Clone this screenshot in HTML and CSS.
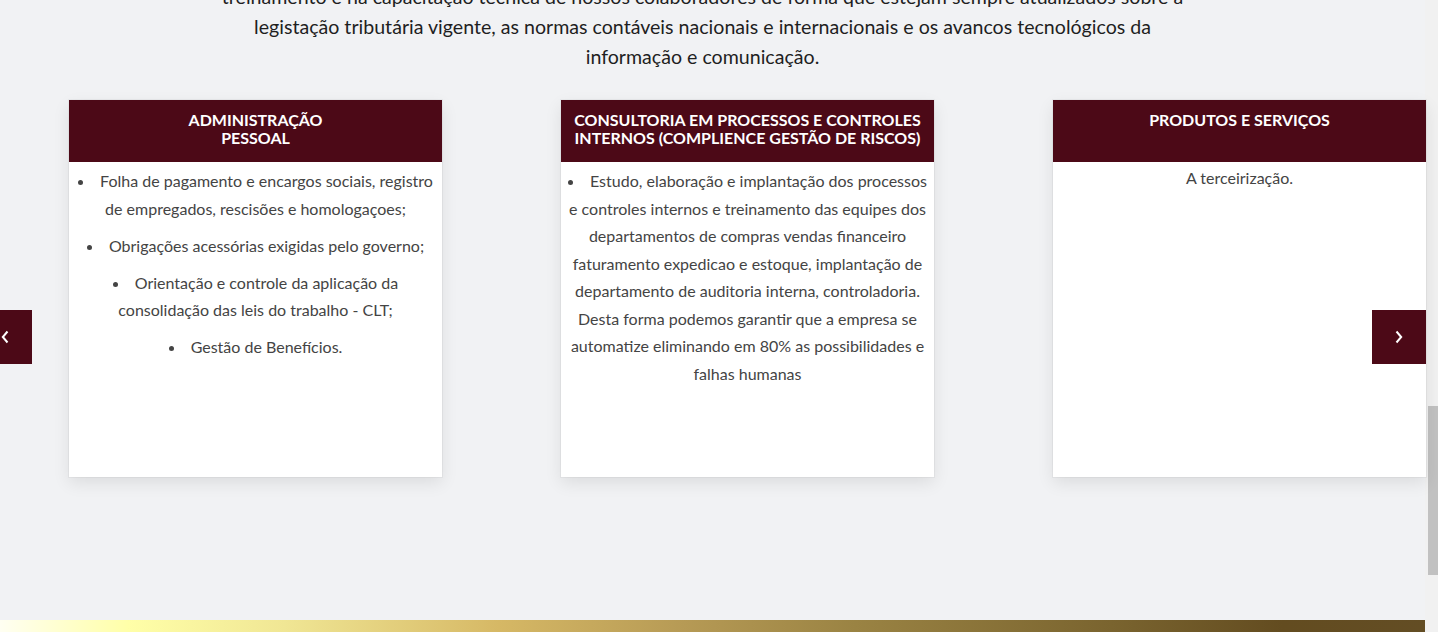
FILE: index.html
```html
<!DOCTYPE html>
<html lang="pt-BR">
<head>
<meta charset="utf-8">
<title>Serviços</title>
<link rel="stylesheet" href="styles.css">
</head>
<body>
<div class="page">
  <main class="main">
    <p class="intro">treinamento e na capacitação técnica de nossos colaboradores de forma que estejam sempre atualizados sobre a legistação tributária vigente, as normas contáveis nacionais e internacionais e os avancos tecnológicos da informação e comunicação.</p>

    <section class="slider">
      <div class="track">
        <article class="card">
          <header class="card-head"><h3>ADMINISTRAÇÃO<br>PESSOAL</h3></header>
          <div class="card-body">
            <ul class="list list-a">
              <li>Folha de pagamento e encargos sociais, registro de empregados, rescisões e homologaçoes;</li>
              <li>Obrigações acessórias exigidas pelo governo;</li>
              <li>Orientação e controle da aplicação da consolidação das leis do trabalho - CLT;</li>
              <li>Gestão de Benefícios.</li>
            </ul>
          </div>
        </article>
        <article class="card">
          <header class="card-head"><h3>CONSULTORIA EM PROCESSOS E CONTROLES INTERNOS (COMPLIENCE GESTÃO DE RISCOS)</h3></header>
          <div class="card-body">
            <ul class="list list-b">
              <li>Estudo, elaboração e implantação dos processos e controles internos e treinamento das equipes dos departamentos de compras vendas financeiro faturamento expedicao e estoque, implantação de departamento de auditoria interna, controladoria. Desta forma podemos garantir que a empresa se automatize eliminando em 80% as possibilidades e falhas humanas</li>
            </ul>
          </div>
        </article>
        <article class="card">
          <header class="card-head"><h3>PRODUTOS E SERVIÇOS</h3></header>
          <div class="card-body">
            <p class="plain">A terceirização.</p>
          </div>
        </article>
      </div>
      <button class="arrow arrow-prev" aria-label="Anterior">
        <svg width="8" height="14" viewBox="0 0 8 14"><path d="M6.5 1.5 L1.8 7 L6.5 12.5" fill="none" stroke="#fff" stroke-width="2"/></svg>
      </button>
      <button class="arrow arrow-next" aria-label="Próximo">
        <svg width="8" height="14" viewBox="0 0 8 14"><path d="M1.5 1.5 L6.2 7 L1.5 12.5" fill="none" stroke="#fff" stroke-width="2"/></svg>
      </button>
    </section>

    <div class="gold-bar"></div>
  </main>
  <div class="scrollbar"><div class="thumb"></div></div>
</div>
</body>
</html>
```
FILE: styles.css
```css
* { box-sizing: border-box; }

html, body {
  margin: 0;
  padding: 0;
  height: 100%;
  overflow: hidden;
}

body {
  background: #f1f2f4;
  font-family: Lato, "Open Sans", Arial, sans-serif;
  color: #444;
}

.page {
  display: flex;
  height: 632px;
}

.main {
  flex: 1;
  display: flex;
  flex-direction: column;
  min-width: 0;
}

.intro {
  margin: -18px auto 0;
  width: 980px;
  position: relative;
  left: -10px;
  font-size: 19.6px;
  line-height: 30px;
  text-align: center;
  color: #1f1f1f;
}

.slider {
  position: relative;
  margin-top: 28px;
}

.track {
  display: flex;
  gap: 119px;
  padding-left: 69px;
}

.card {
  width: 373px;
  flex: 0 0 373px;
  height: 377px;
  background: #fff;
  box-shadow: 0 0 0 1px rgba(0, 0, 0, 0.035), 0 6px 16px rgba(0, 0, 0, 0.09);
  display: flex;
  flex-direction: column;
}

.card-head {
  background: #4c0917;
  height: 62px;
  padding: 11px 6px 0;
}

.card-head h3 {
  margin: 0;
  color: #fff;
  font-size: 16px;
  line-height: 18px;
  font-weight: 700;
  text-align: center;
}

.card-body {
  padding: 5px 6px 0;
  font-size: 16px;
  line-height: 27.5px;
  text-align: center;
  color: #444;
}

.list {
  margin: 0;
  padding: 0;
  list-style: disc inside;
}

.list li {
  margin-bottom: 9.5px;
}

.plain {
  margin: -3px 0 0;
}

.arrow {
  position: absolute;
  top: 210px;
  width: 54px;
  height: 54px;
  border: 0;
  padding: 0;
  background: #4c0917;
  display: flex;
  align-items: center;
  justify-content: center;
  cursor: pointer;
}

.arrow-prev { left: -22px; }
.arrow-next { right: -1px; }

.gold-bar {
  margin-top: auto;
  height: 12px;
  background: linear-gradient(to right, #fffff2 0%, #ffffa8 9%, #f0e694 20%, #d6b865 35%, #b69a55 48%, #9a8343 60%, #7a642f 78%, #634c20 90%, #634d24 100%);
}

.scrollbar {
  flex: 0 0 13px;
  background: #f1f1f1;
  padding: 406px 0 0 3px;
}

.thumb {
  height: 169px;
  background: #c1c1c1;
}
```
